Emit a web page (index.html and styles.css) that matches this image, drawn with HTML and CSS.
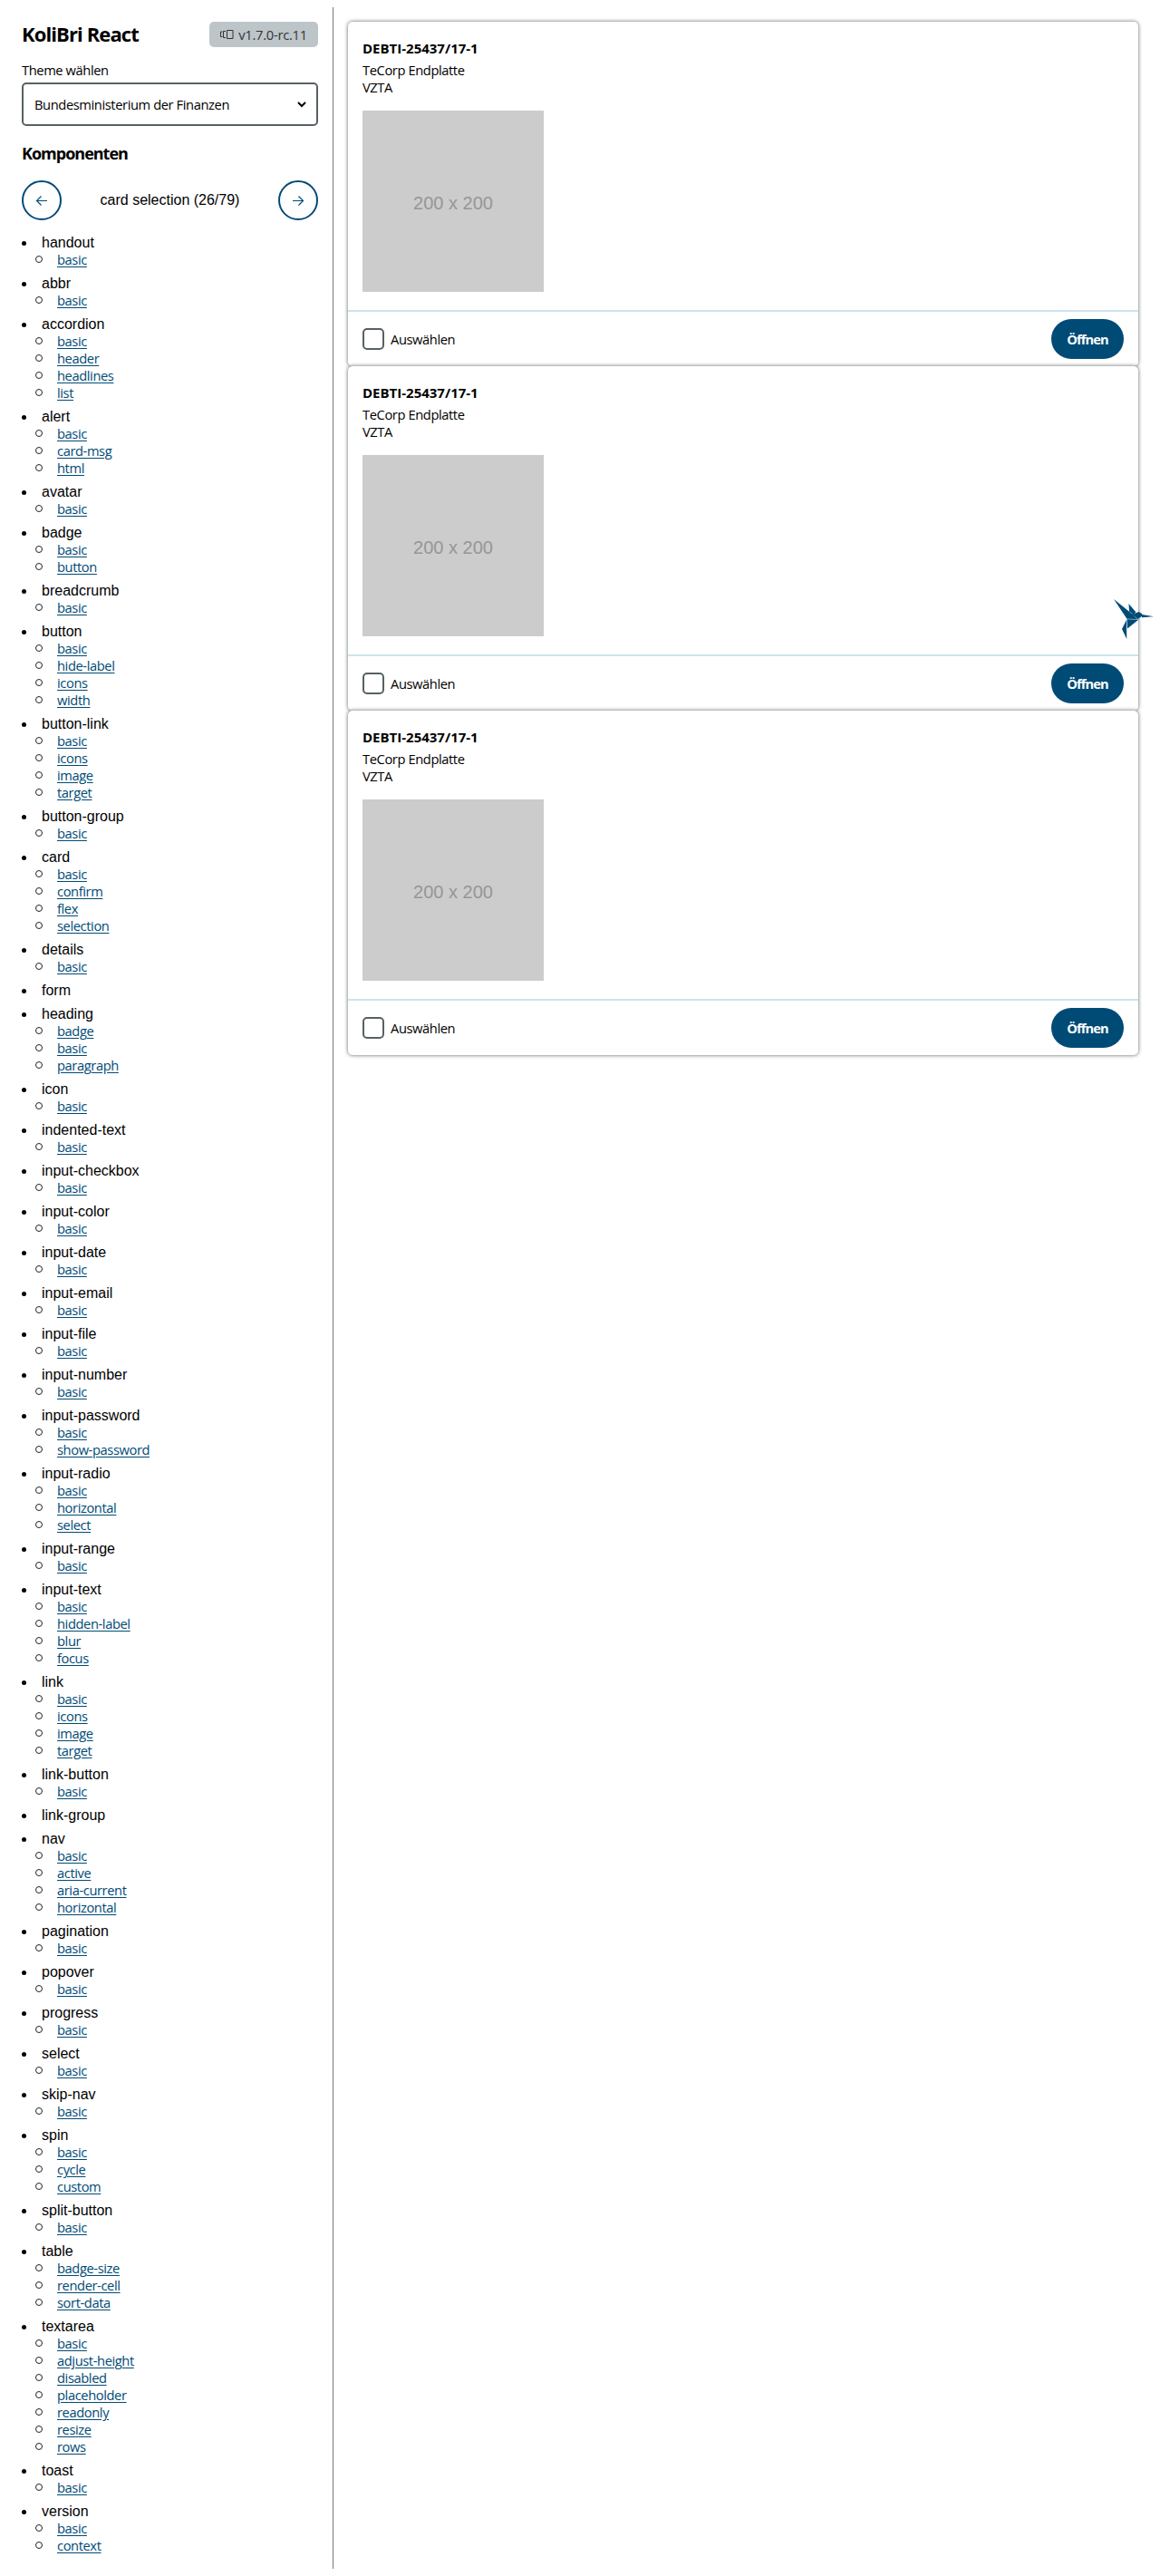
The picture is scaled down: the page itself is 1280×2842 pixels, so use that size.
FILE: index.html
```html
<!DOCTYPE html>
<html lang="de">
<head>
<meta charset="utf-8">
<title>KoliBri React</title>
<link rel="stylesheet" href="styles.css">
</head>
<body>
<div class="layout">
<aside class="sidebar">
<header class="header">
<h1 class="title"><span>KoliBri React</span></h1>
<span class="badge"><svg width="15" height="10" viewBox="0 0 15 10" fill="none" stroke="currentColor"><path d="M2.500 2H.5v5.500h2M6 1.500H3.500v7H6M7.500 .5h6.500v9H7.500z"/></svg><span>v1.7.0-rc.11</span></span>
</header>
<label class="label"><span>Theme wählen</span></label>
<div class="select"><span>Bundesministerium der Finanzen</span><svg width="10" height="7" viewBox="0 0 10 7" fill="none" stroke="#000" stroke-width="2"><path d="M1 1l4 4 4-4"/></svg></div>
<h2 class="subtitle"><span>Komponenten</span></h2>
<nav class="pager">
<button class="round"><svg width="14" height="14" viewBox="0 0 14 14" fill="none" stroke="currentColor" stroke-width="1.200"><path d="M13 7.500H1.500M6.500 2.500l-5 5 5 5"/></svg></button>
<span>card selection (26/79)</span>
<button class="round"><svg width="14" height="14" viewBox="0 0 14 14" fill="none" stroke="currentColor" stroke-width="1.200"><path d="M1 7.500h11.500M7.500 2.500l5 5-5 5"/></svg></button>
</nav>
<ul class="list">
<li>handout<ul><li><a>basic</a></li></ul></li>
<li>abbr<ul><li><a>basic</a></li></ul></li>
<li>accordion<ul><li><a>basic</a></li><li><a>header</a></li><li><a>headlines</a></li><li><a>list</a></li></ul></li>
<li>alert<ul><li><a>basic</a></li><li><a>card-msg</a></li><li><a>html</a></li></ul></li>
<li>avatar<ul><li><a>basic</a></li></ul></li>
<li>badge<ul><li><a>basic</a></li><li><a>button</a></li></ul></li>
<li>breadcrumb<ul><li><a>basic</a></li></ul></li>
<li>button<ul><li><a>basic</a></li><li><a>hide-label</a></li><li><a>icons</a></li><li><a>width</a></li></ul></li>
<li>button-link<ul><li><a>basic</a></li><li><a>icons</a></li><li><a>image</a></li><li><a>target</a></li></ul></li>
<li>button-group<ul><li><a>basic</a></li></ul></li>
<li>card<ul><li><a>basic</a></li><li><a>confirm</a></li><li><a>flex</a></li><li><a>selection</a></li></ul></li>
<li>details<ul><li><a>basic</a></li></ul></li>
<li>form</li>
<li>heading<ul><li><a>badge</a></li><li><a>basic</a></li><li><a>paragraph</a></li></ul></li>
<li>icon<ul><li><a>basic</a></li></ul></li>
<li>indented-text<ul><li><a>basic</a></li></ul></li>
<li>input-checkbox<ul><li><a>basic</a></li></ul></li>
<li>input-color<ul><li><a>basic</a></li></ul></li>
<li>input-date<ul><li><a>basic</a></li></ul></li>
<li>input-email<ul><li><a>basic</a></li></ul></li>
<li>input-file<ul><li><a>basic</a></li></ul></li>
<li>input-number<ul><li><a>basic</a></li></ul></li>
<li>input-password<ul><li><a>basic</a></li><li><a>show-password</a></li></ul></li>
<li>input-radio<ul><li><a>basic</a></li><li><a>horizontal</a></li><li><a>select</a></li></ul></li>
<li>input-range<ul><li><a>basic</a></li></ul></li>
<li>input-text<ul><li><a>basic</a></li><li><a>hidden-label</a></li><li><a>blur</a></li><li><a>focus</a></li></ul></li>
<li>link<ul><li><a>basic</a></li><li><a>icons</a></li><li><a>image</a></li><li><a>target</a></li></ul></li>
<li>link-button<ul><li><a>basic</a></li></ul></li>
<li>link-group</li>
<li>nav<ul><li><a>basic</a></li><li><a>active</a></li><li><a>aria-current</a></li><li><a>horizontal</a></li></ul></li>
<li>pagination<ul><li><a>basic</a></li></ul></li>
<li>popover<ul><li><a>basic</a></li></ul></li>
<li>progress<ul><li><a>basic</a></li></ul></li>
<li>select<ul><li><a>basic</a></li></ul></li>
<li>skip-nav<ul><li><a>basic</a></li></ul></li>
<li>spin<ul><li><a>basic</a></li><li><a>cycle</a></li><li><a>custom</a></li></ul></li>
<li>split-button<ul><li><a>basic</a></li></ul></li>
<li>table<ul><li><a>badge-size</a></li><li><a>render-cell</a></li><li><a>sort-data</a></li></ul></li>
<li>textarea<ul><li><a>basic</a></li><li><a>adjust-height</a></li><li><a>disabled</a></li><li><a>placeholder</a></li><li><a>readonly</a></li><li><a>resize</a></li><li><a>rows</a></li></ul></li>
<li>toast<ul><li><a>basic</a></li></ul></li>
<li>version<ul><li><a>basic</a></li><li><a>context</a></li></ul></li>
</ul>
</aside>
<main class="main">
<article class="card">
<h3><span>DEBTI-25437/17-1</span></h3>
<p><span>TeCorp Endplatte</span><br>VZTA</p>
<div class="image">200 x 200</div>
<footer><label class="check"><i></i><span>Auswählen</span></label><button class="open">Öffnen</button></footer>
</article>
<article class="card">
<h3><span>DEBTI-25437/17-1</span></h3>
<p><span>TeCorp Endplatte</span><br>VZTA</p>
<div class="image">200 x 200</div>
<footer><label class="check"><i></i><span>Auswählen</span></label><button class="open">Öffnen</button></footer>
</article>
<article class="card">
<h3><span>DEBTI-25437/17-1</span></h3>
<p><span>TeCorp Endplatte</span><br>VZTA</p>
<div class="image">200 x 200</div>
<footer><label class="check"><i></i><span>Auswählen</span></label><button class="open">Öffnen</button></footer>
</article>
</main>
</div>
<svg class="bird" width="44" height="44" viewBox="0 0 44 44" fill="#004b76"><path d="M0 0L18 14.500 26 22 14.500 21.800z"/><path d="M16.500 5L24.500 14.500 21.500 16.500 17 13.500z"/><path d="M19 15.800L24 15.500 27.500 14 31 16 31.500 18.500 26.500 22z"/><path d="M31 17L44 19.300 31 20.200z"/><path d="M14.500 22.300L27.500 22.500 15 32.500z"/><path d="M14 23L14.300 44 9 33z"/></svg>
</body>
</html>
```
FILE: styles.css
```css
* { box-sizing: border-box; }
body { margin: 8px; font: 16px/18px "Liberation Sans", Arial, sans-serif; color: #000; background: #fff; }
h1, h2, h3, p, ul { margin: 0; padding: 0; }
.layout { display: flex; height: 2826px; }
.sidebar { width: 360px; padding: 16px; border-right: 1px solid #777; }
.header { display: flex; justify-content: space-between; align-items: center; height: 28px; }
.title, .badge, .label, .select, .subtitle, a, .card h3, .card p, .check, .open { font-family: "Open Sans", "Noto Sans", sans-serif; font-size: 14.7px; letter-spacing: -0.4px; }
.title { font-size: 22px; line-height: 26px; letter-spacing: -0.9px; padding-bottom: 2px; }
.badge { display: flex; align-items: center; justify-content: center; gap: 5px; width: 120px; height: 28px; padding-bottom: 1px; border-radius: 5px; background: #bdc5c9; color: #333; letter-spacing: -0.25px; }
.label { display: block; margin-top: 15px; line-height: 20px; }
.select { display: flex; align-items: center; justify-content: space-between; margin-top: 4px; height: 48px; padding: 0 11px 0 12px; border: 2px solid #576164; border-radius: 5px; }
.subtitle { margin-top: 17px; font-size: 18px; line-height: 26px; letter-spacing: -1px; }
.pager { display: flex; justify-content: space-between; align-items: center; margin-top: 17px; height: 44px; }
.round { display: flex; align-items: center; justify-content: center; width: 44px; height: 44px; padding: 0; border: 2px solid #004b76; border-radius: 50%; background: #fff; color: #004b76; }
.list { margin-top: 16px; padding-left: 22px; }
.list, .list ul { list-style: none; }
.list > li { margin-bottom: 8px; }
.list > li::before { content: ""; display: inline-block; width: 5px; height: 5px; margin: 0 17px 2px -22px; border-radius: 50%; background: #000; vertical-align: baseline; }
.list ul { padding-left: 15px; }
.list ul li { height: 19px; line-height: 19px; }
.list ul li::before { content: ""; display: inline-block; width: 6px; height: 6px; margin: 0 16px 2px -22px; border: 1px solid #222; border-radius: 50%; }
a { color: #004b76; text-decoration: underline; text-underline-offset: 2px; }
.main { flex: 1; padding: 16px; }
.card { height: 380px; padding-top: 19px; border-radius: 5px; background: #fff; box-shadow: 0 0 4px #576164; }
.card h3 { padding: 0 16px; font-size: 15px; line-height: 20px; letter-spacing: 0; }
.card p { padding: 0 16px; margin-top: 5px; line-height: 19px; }
.image { display: flex; align-items: center; justify-content: center; width: 200px; height: 200px; margin: 16px 16px 20px; padding-top: 4px; background: #ccc; color: #969696; font-size: 20px; }
.card footer { display: flex; justify-content: space-between; align-items: center; height: 62px; padding: 0 16px; border-top: 2px solid #cce4ef; }
.check { display: flex; align-items: center; gap: 7px; }
.check i { width: 24px; height: 24px; border: 2px solid #576164; border-radius: 5px; }
.open { width: 80px; height: 44px; padding: 0; border: 0; border-radius: 22px; background: #004b76; color: #fff; font-weight: 700; letter-spacing: -0.9px; }
.bird { position: absolute; left: 1229px; top: 661px; }
```
